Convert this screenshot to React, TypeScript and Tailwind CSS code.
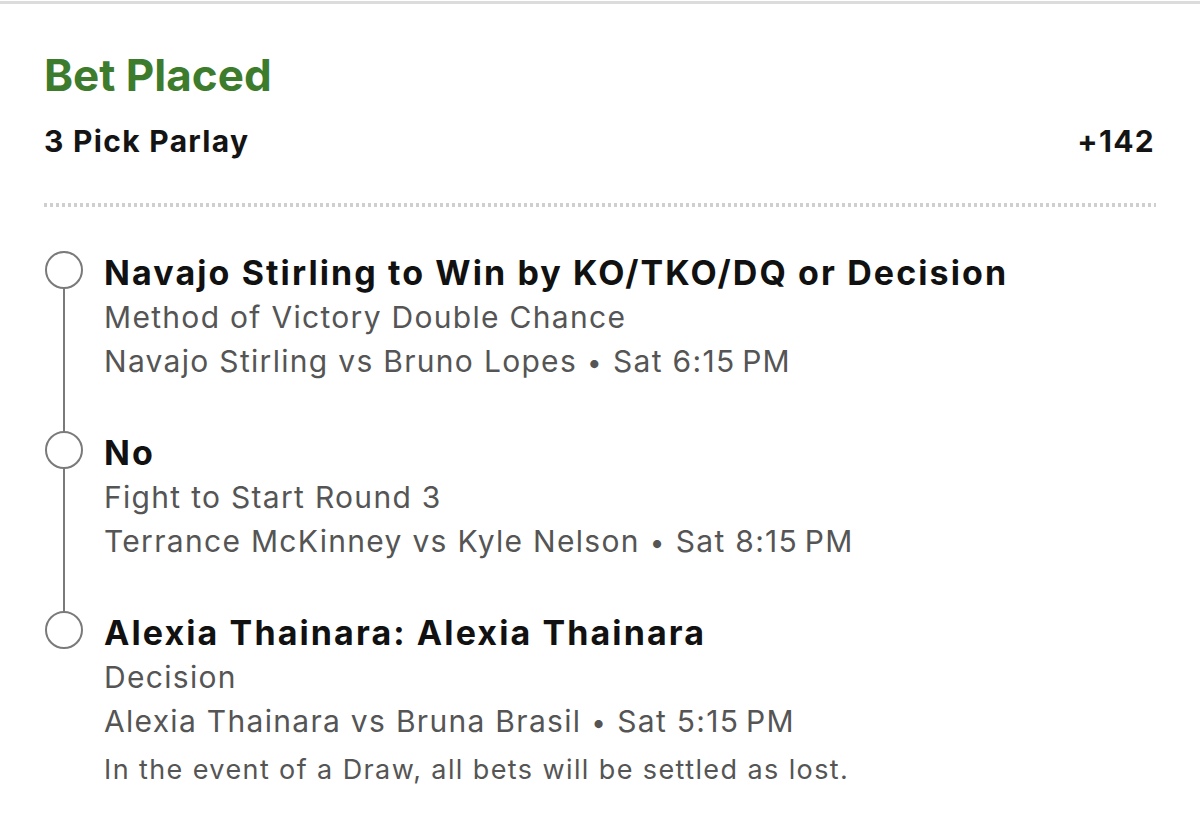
const legs = [
  {
    title: "Navajo Stirling to Win by KO/TKO/DQ or Decision",
    market: "Method of Victory Double Chance",
    event: "Navajo Stirling vs Bruno Lopes",
    time: "Sat 6:15\u2009PM",
  },
  {
    title: "No",
    market: "Fight to Start Round 3",
    event: "Terrance McKinney vs Kyle Nelson",
    time: "Sat 8:15\u2009PM",
  },
  {
    title: "Alexia Thainara: Alexia Thainara",
    market: "Decision",
    event: "Alexia Thainara vs Bruna Brasil",
    time: "Sat 5:15\u2009PM",
    note: "In the event of a Draw, all bets will be settled as lost.",
  },
];

function Leg({ leg, last }: { leg: (typeof legs)[number]; last: boolean }) {
  return (
    <div className="flex">
      <div className="flex w-[38px] flex-col items-center">
        <div className="h-[38px] w-[38px] shrink-0 rounded-full border-[2.5px] border-[#7a7a7a]" />
        {!last && <div className="w-[2px] flex-1 bg-[#7a7a7a]" />}
      </div>
      <div className={`ml-[21px] ${last ? "" : "pb-[48px]"}`}>
        <p className="text-[34px] font-bold leading-[44px] tracking-[2.1px] text-[#111]">{leg.title}</p>
        <p className="text-[30px] leading-[44px] tracking-[1.3px] text-[#555]">{leg.market}</p>
        <p className="h-[44px] text-[30px] leading-[44px] tracking-[1.3px] text-[#555]">
          {leg.event}
          <span className="mx-[10px] text-[26px] leading-none">•</span>
          {leg.time}
        </p>
        {leg.note && (
          <p className="mt-[8px] text-[27px] leading-[38px] tracking-[1.4px] text-[#555]">{leg.note}</p>
        )}
      </div>
    </div>
  );
}

export default function App() {
  return (
    <div className="min-h-[823px] bg-white font-['Inter',sans-serif]">
      <div className="mt-[1px] h-[3px] bg-[#dcdcdc]" />
      <div className="px-[44px] pt-[47px]">
        <h1 className="text-[44px] font-bold leading-[48px] text-[#3e7c2d]">Bet Placed</h1>
        <div className="mt-[22px] flex items-center justify-between text-[30px] font-bold leading-[40px] tracking-[1.3px] text-[#141414]">
          <span>3 Pick Parlay</span>
          <span className="mr-[1px]">+142</span>
        </div>
        <div className="mt-[42px] h-[4px] bg-[repeating-linear-gradient(90deg,#cfcfcf_0_3px,transparent_3px_6px)]" />
        <div className="mt-[44px] ml-[1px]">
          {legs.map((leg, i) => (
            <Leg key={i} leg={leg} last={i === legs.length - 1} />
          ))}
        </div>
      </div>
    </div>
  );
}
